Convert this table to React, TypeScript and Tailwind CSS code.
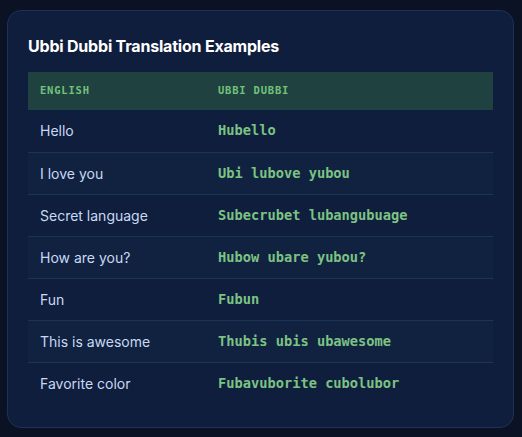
const rows: [string, string][] = [
  ['Hello', 'Hubello'],
  ['I love you', 'Ubi lubove yubou'],
  ['Secret language', 'Subecrubet lubangubuage'],
  ['How are you?', 'Hubow ubare yubou?'],
  ['Fun', 'Fubun'],
  ['This is awesome', 'Thubis ubis ubawesome'],
  ['Favorite color', 'Fubavuborite cubolubor'],
];

const mono = { fontFamily: '"DejaVu Sans Mono", "Liberation Mono", monospace' };

export default function App() {
  return (
    <div
      className="w-[522px] h-[437px] bg-[#0a1224] pt-[10px] pl-[7px]"
      style={{ fontFamily: 'Inter, "Noto Sans", sans-serif' }}
    >
      <div className="w-[507px] h-[418px] rounded-[14px] border border-[#1d3157] bg-[#0f1e3d] px-5 pt-[22px]">
        <h2 className="text-[16px] leading-[26px] font-bold text-white tracking-[-0.2px] mb-[13px]">
          Ubbi Dubbi Translation Examples
        </h2>
        <table className="w-[465px] border-collapse">
          <thead>
            <tr className="bg-[#1f4140] h-[38px]">
              <th
                className="w-[178px] pl-3 text-left text-[10.5px] font-bold tracking-[0.8px] text-[#72c27c]"
                style={mono}
              >
                ENGLISH
              </th>
              <th
                className="pl-3 text-left text-[10.5px] font-bold tracking-[0.8px] text-[#72c27c]"
                style={mono}
              >
                UBBI DUBBI
              </th>
            </tr>
          </thead>
          <tbody>
            {rows.map(([en, ub], i) => (
              <tr
                key={en}
                className={
                  'h-[42px] ' +
                  (i > 0 ? 'border-t border-[#1c3556] ' : '') +
                  (i % 2 === 1 ? 'bg-[#112241]' : 'bg-[#0f1e3d]')
                }
              >
                <td className="pl-3 text-[14px] text-[#c9d9f2]">{en}</td>
                <td className="pl-3 text-[13.7px] font-bold text-[#7cc383]" style={mono}>
                  {ub}
                </td>
              </tr>
            ))}
          </tbody>
        </table>
      </div>
    </div>
  );
}
